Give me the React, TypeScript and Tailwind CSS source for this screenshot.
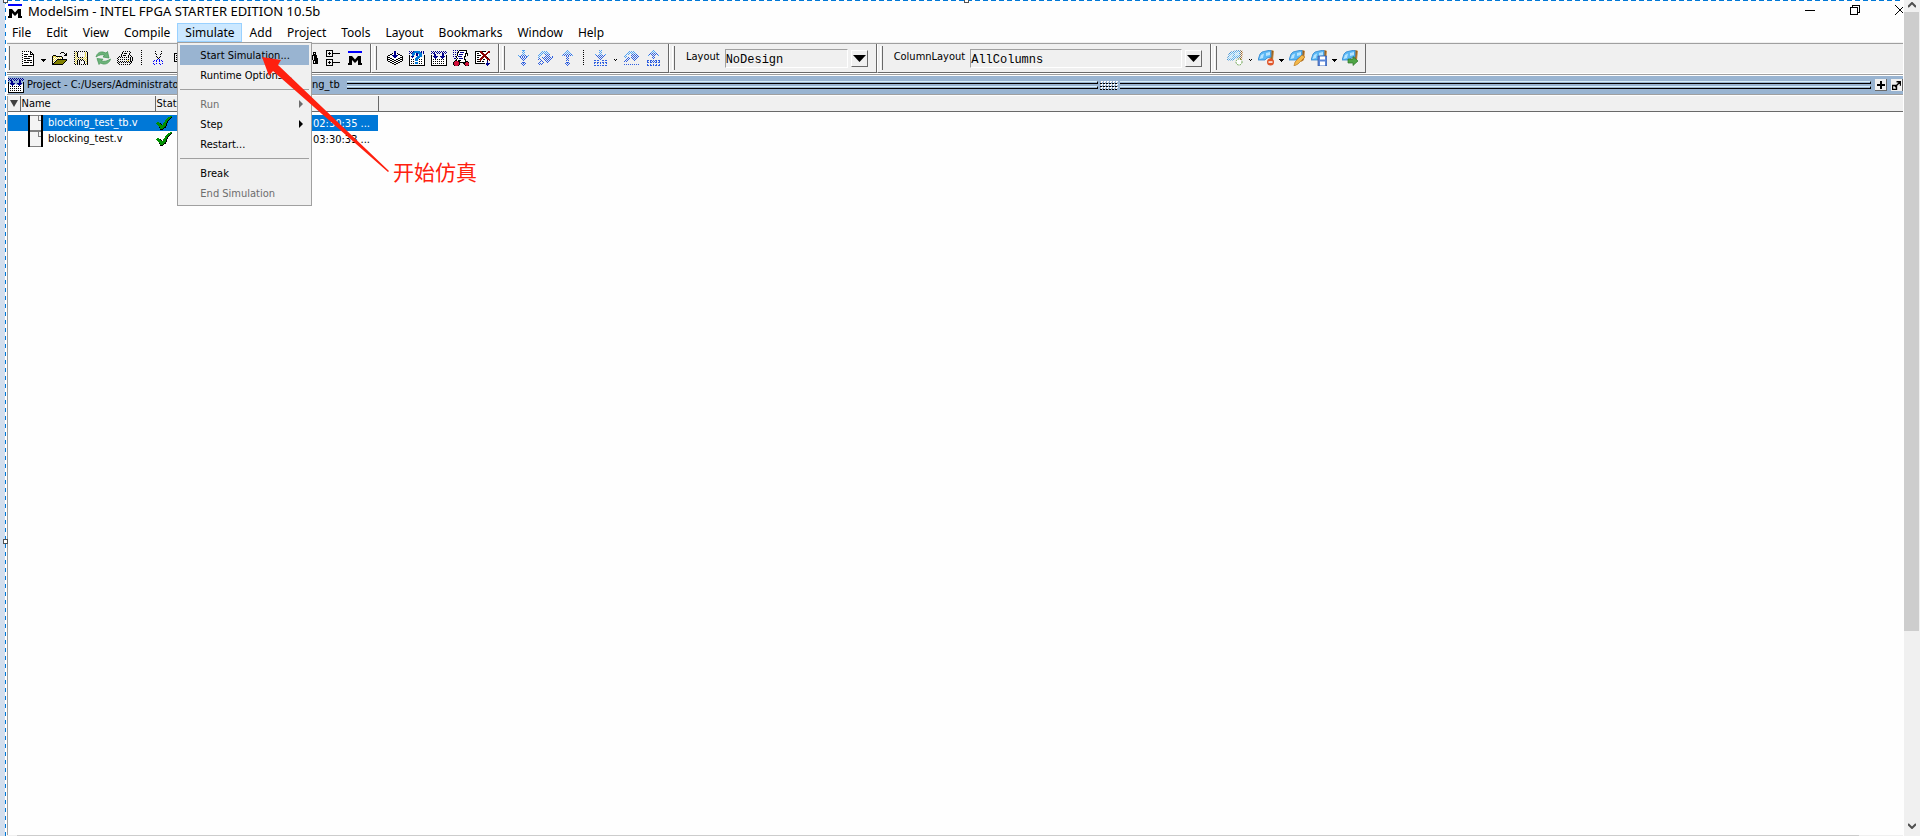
import type { ReactNode } from "react";

const colors: Record<string, string> = {
  k: "#000000",
  w: "#ffffff",
  n: "#00008b",
  B: "#0000ff",
  c: "#2f5fe0",
  l: "#4fa3f5",
  q: "#0078d7",
  y: "#e8d84a",
  o: "#808000",
  g: "#808080",
  r: "#8b0000",
  R: "#d0103a",
  d: "#009000",
};

const icons = {
  doc: [
    "k.k.k.k.k....",
    ".wwwwwwwkk...",
    "kwwwwwwwkwk..",
    ".wkkkkwwkkkk.",
    "kwwwwwwwwwwk.",
    ".wkkkwkkkkwk.",
    "kwwwwwwwwwwk.",
    ".wkkkkkkwwwk.",
    "kwwwwwwwwwwk.",
    ".wkkwkkkkkwk.",
    "kwwwwwwwwwwk.",
    ".wkkkkkwkkwk.",
    "kwwwwwwwwwwk.",
    ".wwwwwwwwwwk.",
    "kkkkkkkkkkkk.",
  ],
  open: [
    "..........kkk...",
    ".........k...k.k",
    "..............kk",
    "..kkk........kkk",
    ".kyyykkkkkk.....",
    ".kywywywywyk....",
    ".kwywywywywk....",
    ".kywywkkkkkkkkkk",
    ".kwywkoooooooook",
    ".kywkoooooooook.",
    ".kwkoooooooook..",
    ".kkoooooooook...",
    ".kkkkkkkkkkk....",
  ],
  save: [
    "k.k.k.k.k.k.k.",
    ".y.k.......y.k",
    "k.yk.w.w.w.y.k",
    ".y.k.......y.k",
    "k.yk.w.w.w.y.k",
    ".y.k.......y.k",
    "k.y.k.k.k.y.yk",
    ".y.y.y.y.y.y.k",
    "k.y.k.k.k.y.yk",
    ".y.k.k.k.k.y.k",
    "k.yk.k..w.k.yk",
    ".y.k.k..w.k..k",
    "k.yk.k..w.k.yk",
    ".k.k.k.k.k.k.k",
  ],
  print: [
    "......k.k.k.k...",
    ".....k.......k..",
    ".....k.kkk..k...",
    "....k.......k...",
    "....k.kkk..k.k..",
    "..k.k......k..k.",
    ".k.k.k.k.k.k.k.k",
    "k............k.k",
    ".k.k.k.k.k.k.k.k",
    "k.........yy.k.k",
    ".k.k.k.k.k.k.kk.",
    "k.k.k.k.k.k.k.k.",
    ".k...........k..",
    "..k.k.k.k.k.k...",
  ],
  cut: [
    "..k.....k.",
    "..........",
    "..k.....k.",
    "...k...k..",
    "..........",
    "...k...k..",
    "....k.k...",
    ".....k....",
    "....B.B...",
    ".B.B..B.B.",
    "B..B..B..B",
    "..........",
    "B..B..B..B",
    ".B.....B..",
  ],
  copy: [
    "kkkkkkkk....",
    "k......kk...",
    "k.kkk..kkk..",
    "k........k..",
    "k.kkk.kkkkkk",
    "k.....k....k",
    "k.kkk.k.kk.k",
    "k.....k....k",
    "kkkkkkk.kk.k",
    "......k....k",
    "......kkkkkk",
  ],
  find: [
    "..kkk...kkk..",
    "..k.k...k.k..",
    "..kkk...kkk..",
    ".kkkkk.kkkkk.",
    ".k.kkkkk.kkk.",
    ".k.kkkkk.kkk.",
    "k.kkkk.k.kkkk",
    "k.kkkk.k.kkkk",
    "kkkkk...kkkkk",
    "k.kkk...k.kkk",
    "k.kkk...k.kkk",
    "kkkkk...kkkkk",
  ],
  tree: [
    "kkkkkkk.......",
    "k.....k.......",
    "k..k..k.......",
    "k.kkk.kkkkkkkk",
    "k..k..k.......",
    "k.....k.......",
    "kkkkkkk.......",
    "..............",
    "..............",
    "kkkkkkk.......",
    "k.....k.......",
    "k..k..k.......",
    "k.kkk.kkkkkkkk",
    "k..k..k.......",
    "k.....k.......",
    "kkkkkkk.......",
  ],
  compile: [
    ".......nn.......",
    ".......nn.......",
    ".....kwnnwk.....",
    "...kkwwnnwwkk...",
    ".kkwwnnnnnnwwkk.",
    "kwwwwwnnnnwwwwwk",
    "kkkwwwwnnwwwwkkk",
    "kwwkkwwwwwwkkwwk",
    "kkkwwkkwwkkwwkkk",
    "kwwkkwwkkwwkkwwk",
    ".kkwwkkwwkkwwkk.",
    "...kkwwkkwwkk...",
    ".....kkwwkk.....",
    ".......kk.......",
  ],
  compileAll: [
    "n.n.n.n.n.n.n.n.",
    ".n.n.n.n.n.n.n.n",
    "n.nn..n.n..nn.n.",
    "...nn......nn...",
    "k..nn......nn..k",
    "k.nnnnn..nnnnn.k",
    "kw.nnn.w..nnn.wk",
    "kwwwnwwwwwwnwwwk",
    "kwkwkwkwkwkwkwwk",
    "kwwwwwwwwwwwwwwk",
    "kwkwkwkwkwkwkwwk",
    "kwwwwwwwwwwwwwwk",
    "kwkwkwkwkwkwkwwk",
    "kwwwwwwwwwwwwwwk",
    "kkkkkkkkkkkkkkkk",
  ],
  compileOld: [
    "n.n.nqqqqqq.n.n.",
    ".n.nqqqqqqqqn.n.",
    "n.nqqq.nnqqqq.n.",
    "...qqq.nn.qqq...",
    "k..qq..nn.qqq..k",
    "k.nnn...qqqqq..k",
    "kw.n.w.qqqqw.w.k",
    "kwwwwwqqqqwwwwwk",
    "kwkwkwqqqwkwkwwk",
    "kwwwwwqqqwwwwwwk",
    "kwkwkwwwwwkwkwwk",
    "kwwwwwqqqwwwwwwk",
    "kwkwkwqqqwkwkwwk",
    "kwwwwwwwwwwwwwwk",
    "kkkkkkkkkkkkkkkk",
  ],
  simulate: [
    "n.n.n.kkkkkkkk..",
    ".....kwwwwwwwk..",
    "n.n.nkwnnnnwwk..",
    "....kwwwwwwwkkk.",
    "n.n.kwnnnnwwkwk.",
    "....kwwwwwwwkwk.",
    "n.nkwnnnnwwkk...",
    "...kwwwwwwwk....",
    ".nn.kwnnnnwk....",
    "...kwwwwwwwkk...",
    "..kkwkkkwwwwk...",
    ".kRRRkkwwwwwkkk.",
    "kRRRRRkkkkkkkRRk",
    "kRRRRRk...kkRRRR",
    "kRRRRRk....kRRRR",
    ".kRRRk......kRRk",
  ],
  breakRun: [
    "kkkkkrrkkkk..rr.",
    "kwwwwrrrwwwwrrr.",
    "kwkkwwrrrwwrrw..",
    "kwwwwwwrrrrrw...",
    "kwkkkkwwrrrww...",
    "kwwwwwwrrrrrw...",
    "kwkkwwrrrwrrk...",
    "kwwwwrrrwwwrrr..",
    "kwkkrrrwkkwwrrr.",
    "kwwwwrwwwwwwkwr.",
    "kwkkkkwkkww.n...",
    "kwwwwwwwwww.n...",
    "kkkkkkkkkk.nnnn.",
    "...........nnn..",
    "............n...",
  ],
  down: [
    "....lll....",
    ".....l.....",
    "....l.l....",
    ".....l.....",
    "....l.l....",
    "l..c.c.c..l",
    ".lc.c.c.cl.",
    "..c.c.c.c..",
    "...c.c.c...",
    "....c.c....",
    ".....c.....",
    "...........",
    "....ccc....",
    "...c.c.c...",
    "....c.c....",
    ".....c.....",
  ],
  over: [
    "....l.l.l......",
    "...l.l.l.l.....",
    "..l.l.l.l.l....",
    ".l.l...c.c.c...",
    "l.l.....c.c....",
    ".l.....c.c.c..c",
    "l...c.c.c.c.c.c",
    ".c...c.c.c.c.c.",
    "c.c...c.c.c.c..",
    "...c...c.c.c...",
    "..c.c...c.c....",
    ".c...c...c.....",
    "c.c.c..........",
    ".c.c...........",
  ],
  up: [
    ".....l.....",
    "....l.l....",
    "...l.l.l...",
    "..l.l.l.l..",
    ".c.c.c.c.c.",
    "l.c.c.c.c.l",
    "....c.c....",
    ".....c.....",
    "....c.c....",
    ".....c.....",
    "....c.c....",
    "...........",
    "....ccc....",
    "...c.c.c...",
    "....c.c....",
    ".....c.....",
  ],
  downC: [
    ".....l.l.....",
    "......l......",
    ".....l.l.....",
    "......l......",
    ".l...l.l...l.",
    "..c.c.c.c.c..",
    "...c.c.c.c...",
    "....c.c.c....",
    ".....c.c.....",
    "......c......",
    "cc.cc...cc.cc",
    ".............",
    "cc.cc.c.cc.cc",
    "c..c..c..c..c",
    ".............",
    "cc.cc.c.cc.cc",
  ],
  overC: [
    ".....l.l.l.....",
    "....l.l.l.l....",
    "...l.l.l.l.l...",
    "..l.l...c.c.c..",
    ".l.....c.c.c.c.",
    "l.l.....c.c.c.c",
    ".l..c..c.c.c.c.",
    "...c.c..c.c.c..",
    "..c.c....c.c...",
    ".c.c......c....",
    "c.c............",
    "...............",
    "...............",
    "c.c.c.c.c.c.c.c",
    "...............",
  ],
  upC: [
    "......l......",
    ".....l.l.....",
    "....l.l.l....",
    "...c.c.c.c...",
    "..c.c.c.c.c..",
    ".l...c.c...l.",
    "......c......",
    ".....c.c.....",
    "......c......",
    ".............",
    "cc.cc.c.cc.cc",
    "c..c.c.c.c..c",
    "cc.cc.c.cc.cc",
    ".............",
    "c..c..c..c..c",
    "cc.cc.c.cc.cc",
  ],
  check: [
    "..............dd",
    "............dddk",
    "...........dddk.",
    "..........dddk..",
    ".........dddk...",
    ".........ddk....",
    ".dd.....dddk....",
    "ddddk..dddk.....",
    ".ddddk.dddk.....",
    "..ddddddddk.....",
    "...ddddddk......",
    "...kddddkk......",
    "....dddk........",
    "....kkk.........",
  ],
};

function Pixels({ name }: { name: keyof typeof icons }) {
  const rows = icons[name];
  const w = Math.max(...rows.map((r) => r.length));
  return (
    <svg width={w} height={rows.length} shapeRendering="crispEdges" aria-hidden="true" className="shrink-0">
      {rows.flatMap((row, y) =>
        row.split("").map((ch, x) =>
          ch === "." ? null : (
            <rect key={`${x}-${y}`} x={x} y={y} width={1} height={1} fill={colors[ch]} />
          )
        )
      )}
    </svg>
  );
}

function Caret({ small }: { small?: boolean }) {
  return (
    <svg width={small ? 3 : 5} height={small ? 2 : 3} shapeRendering="crispEdges" aria-hidden="true">
      <path d={small ? "M0 0h1v1h1v1h-1v-1h-1zM2 0h1v1h-1z" : "M0 0h5v1h-1v1h-1v1h-1v-1h-1v-1h-1z"} />
    </svg>
  );
}

function Tool({ label, children }: { label: string; children: ReactNode }) {
  return (
    <button type="button" aria-label={label} className="flex w-[22px] h-5 items-center justify-center">
      {children}
    </button>
  );
}

function DropArrow({ label, small }: { label: string; small?: boolean }) {
  return (
    <button type="button" aria-label={label} className="flex w-[9px] h-5 pt-1 items-center justify-center">
      <Caret small={small} />
    </button>
  );
}

function Dots() {
  return (
    <div className="w-[11px] h-4 flex justify-center">
      <div className="w-px bg-[repeating-linear-gradient(#000_0_1px,transparent_1px_2px)]" />
    </div>
  );
}

function Group({ children }: { children: ReactNode }) {
  return (
    <div className="flex items-center h-[29px] pl-0.5 pr-1 border-l border-l-white border-r border-b border-r-[#696969] border-b-[#696969] first:border-l-0 first:pl-0">
      <div className="w-[3px] h-6 mr-[7px] border-l border-l-white border-r border-r-[#696969]" />
      {children}
    </div>
  );
}

function LayoutPicker({ id, label, value, width }: { id: string; label: string; value: string; width: string }) {
  return (
    <div className="flex items-center px-1 text-[11px]">
      <label htmlFor={id} className="pr-[5px] pb-0.5">
        {label}
      </label>
      <select
        id={id}
        defaultValue={value}
        className={`${width} h-[19px] pt-0.5 mr-[3px] appearance-none border-t border-l border-t-[#a0a0a0] border-l-[#a0a0a0] border-b border-r border-b-white border-r-white font-['Liberation_Mono',monospace] text-xs`}
      >
        <option>{value}</option>
      </select>
      <button
        type="button"
        aria-label={`Open ${label}`}
        className="flex w-[17px] h-[17px] items-center justify-center border-t border-l border-white border-r border-b border-r-[#696969] border-b-[#696969]"
      >
        <svg width="13" height="7" aria-hidden="true">
          <path d="M0 0h13l-6.5 7z" />
        </svg>
      </button>
    </div>
  );
}

function Logo({ width }: { width: number }) {
  return (
    <svg width={width} height={width} viewBox="0 0 14 14" aria-hidden="true" className="shrink-0">
      <path d="M0 0h14v2H0z" fill="#0000ff" />
      <path d="M1 5h3l3 3.5L10 5h3v7h1v2h-4V9l-3 3-3-3v5H0v-2h1z" />
    </svg>
  );
}

function Refresh() {
  return (
    <svg width="16" height="16" viewBox="0 0 16 16" aria-hidden="true">
      <path d="M1 7C2 3 5 1.500 8 2l3 1 1.500-1.500L14 8 8 7l1.500-1.700C7 4 4 5 1 7z" fill="#6db37a" stroke="#3f9150" strokeWidth=".7" />
      <path d="M15.500 9C14.500 13 11 14.500 8 14l-2.500-1L4 14.500 2 8.500l6 .7-1.500 1.600C9 12 12.500 11 15.500 9z" fill="#6db37a" stroke="#3f9150" strokeWidth=".7" />
    </svg>
  );
}

// Bookmark ribbon with a badge in the lower right corner
function Bookmark({ faded, children }: { faded?: boolean; children: ReactNode }) {
  return (
    <svg width="16" height="16" viewBox="0 0 16 16" aria-hidden="true">
      {faded && (
        <defs>
          <pattern id="dither" width="2" height="2" patternUnits="userSpaceOnUse">
            <path d="M0 0h1v1h-1zM1 1h1v1h-1z" fill="#f0f0f0" />
          </pattern>
        </defs>
      )}
      <path d="M11 1l3-1 2 1-1 9-3 2z" fill="#c98a3d" />
      <path d="M14 1l1 0-1 9-1 1z" fill="#8a5a20" />
      <path d="M4 2l4-1 5-1v7l-4 1-2 2H0l2-6z" fill="#5cb8f5" stroke="#2f86cf" strokeWidth=".8" />
      <path d="M3 5l3-1.500L5 8 1.500 9zM8 3l4-1v3l-4 1z" fill="#b5e4ff" />
      {faded && <path d="M0 0h16v16H0z" fill="url(#dither)" />}
      {children}
    </svg>
  );
}

const menus = ["File", "Edit", "View", "Compile", "Simulate", "Add", "Project", "Tools", "Layout", "Bookmarks", "Window", "Help"];

const simulateMenu: { label: string; active?: boolean; disabled?: boolean; sub?: boolean }[][] = [
  [{ label: "Start Simulation...", active: true }, { label: "Runtime Options..." }],
  [{ label: "Run", disabled: true, sub: true }, { label: "Step", sub: true }, { label: "Restart..." }],
  [{ label: "Break" }, { label: "End Simulation", disabled: true }],
];

const files = [
  { name: "blocking_test_tb.v", modified: "02:30:35 ...", selected: true },
  { name: "blocking_test.v", modified: "03:30:33 ...", selected: false },
];

function SimulateMenu() {
  return (
    <div className="absolute left-0 top-full z-10 w-[135px] p-0.5 bg-[#f0f0f0] border border-[#a0a0a0] font-['DejaVu_Sans_Condensed','DejaVu_Sans',sans-serif] text-[11px]">
      {simulateMenu.map((section, i) => (
        <div key={i}>
          {i > 0 && <div className="my-1 h-px bg-[#a0a0a0]" />}
          {section.map((item) => (
            <button
              key={item.label}
              type="button"
              disabled={item.disabled}
              className={`flex w-full h-5 items-center justify-between pl-5 pr-1.5 whitespace-nowrap ${item.active ? "bg-[#99b4d1]" : ""} ${
                item.disabled ? "text-[#6d6d6d]" : "text-black"
              }`}
            >
              {item.label}
              {item.sub && (
                <svg width="4" height="8" aria-hidden="true">
                  <path d="M0 0l4 4-4 4z" fill="currentColor" />
                </svg>
              )}
            </button>
          ))}
        </div>
      ))}
    </div>
  );
}

function TitleBar() {
  return (
    <header className="flex h-[22px] items-center justify-between pl-px">
      <div className="flex items-center pb-0.5">
        <Logo width={14} />
        <h1 className="pl-1.5 text-[13px] leading-5">ModelSim - INTEL FPGA STARTER EDITION 10.5b</h1>
      </div>
      <div className="flex h-4 self-start">
        <button type="button" aria-label="Minimize" className="flex w-[45px] items-center justify-center pt-0.5">
          <svg width="10" height="1"><path d="M0 0h10v1H0z" /></svg>
        </button>
        <button type="button" aria-label="Restore" className="flex w-[45px] items-center justify-center pt-0.5">
          <svg width="10" height="10" fill="none" stroke="#000" shapeRendering="crispEdges">
            <path d="M.5 2.500h7v7h-7zM2.500 2.500v-2h7v7h-2" />
          </svg>
        </button>
        <button type="button" aria-label="Close" className="flex w-[26px] items-center justify-end pt-0.5">
          <svg width="8" height="10" fill="none" stroke="#000"><path d="M0 0l10 10M0 10L10 0" /></svg>
        </button>
      </div>
    </header>
  );
}

function Toolbar() {
  return (
    <div className="flex h-[31px] border-t border-t-[#a0a0a0] border-b border-b-white bg-[#f0f0f0]">
      <Group>
        <Tool label="New"><Pixels name="doc" /></Tool>
        <DropArrow label="New options" />
        <Tool label="Open"><Pixels name="open" /></Tool>
        <Tool label="Save"><Pixels name="save" /></Tool>
        <Tool label="Reload"><Refresh /></Tool>
        <Tool label="Print"><Pixels name="print" /></Tool>
        <Dots />
        <Tool label="Cut"><Pixels name="cut" /></Tool>
        <Tool label="Copy"><Pixels name="copy" /></Tool>
        <div className="w-[109px]" />
        <Tool label="Find"><Pixels name="find" /></Tool>
        <Tool label="Hierarchy"><Pixels name="tree" /></Tool>
        <Tool label="ModelSim"><Logo width={14} /></Tool>
      </Group>
      <Group>
        <Tool label="Compile"><Pixels name="compile" /></Tool>
        <Tool label="Compile out of date"><Pixels name="compileOld" /></Tool>
        <Tool label="Compile all"><Pixels name="compileAll" /></Tool>
        <Tool label="Simulate"><Pixels name="simulate" /></Tool>
        <Tool label="Break"><Pixels name="breakRun" /></Tool>
      </Group>
      <Group>
        <Tool label="Step into"><Pixels name="down" /></Tool>
        <Tool label="Step over"><Pixels name="over" /></Tool>
        <Tool label="Step out"><Pixels name="up" /></Tool>
        <Dots />
        <Tool label="Step into current"><Pixels name="downC" /></Tool>
        <DropArrow label="Step options" small />
        <Tool label="Step over current"><Pixels name="overC" /></Tool>
        <Tool label="Step out current"><Pixels name="upC" /></Tool>
      </Group>
      <Group>
        <LayoutPicker id="layout" label="Layout" value="NoDesign" width="w-[123px]" />
      </Group>
      <Group>
        <LayoutPicker id="column-layout" label="ColumnLayout" value="AllColumns" width="w-[212px]" />
      </Group>
      <Group>
        <Tool label="Add bookmark">
          <Bookmark faded><circle cx="12" cy="12" r="3" fill="#fff" stroke="#5a9a3a" strokeDasharray="1.500 1" /></Bookmark>
        </Tool>
        <DropArrow label="Add bookmark options" small />
        <Tool label="Delete bookmark">
          <Bookmark><circle cx="12.500" cy="12" r="3.500" fill="#e0562a" /><path d="M10.500 11.300h4v1.500h-4z" fill="#fff" /></Bookmark>
        </Tool>
        <DropArrow label="Delete bookmark options" />
        <Tool label="Edit bookmarks">
          <Bookmark><path d="M13 5l3 2-7 7-4 2 1-4z" fill="#f3b84a" stroke="#b9781e" strokeWidth=".7" /></Bookmark>
        </Tool>
        <Tool label="Save bookmarks">
          <Bookmark><path d="M7 6h9v10H7z" fill="#5b86d8" stroke="#34589f" strokeWidth=".7" /><path d="M9 6.500h5v3H9zM9 11.500h5v4H9z" fill="#fff" /></Bookmark>
        </Tool>
        <DropArrow label="Save bookmarks options" />
        <Tool label="Go to bookmark">
          <Bookmark><path d="M6 9h5V6.500l5 4.500-5 4.500V13H6z" fill="#4fa545" stroke="#2c7428" strokeWidth=".7" /></Bookmark>
        </Tool>
      </Group>
    </div>
  );
}

function Rails() {
  return (
    <div className="flex-1 flex flex-col gap-0.5">
      <div className="h-[3px] border-t border-t-[#d8f0f8] border-b border-b-black border-r border-r-black" />
      <div className="h-[3px] border-t border-t-[#d8f0f8] border-b border-b-black border-r border-r-black" />
    </div>
  );
}

function PaneTitle() {
  return (
    <div className="flex items-center h-[18px] bg-[#99b4d1] text-[11px] leading-4">
      <div className="w-[17px]"><Pixels name="compileAll" /></div>
      <h2 className="flex pl-0.5 pr-[7px] whitespace-nowrap">
        <span className="w-[285px] overflow-hidden">Project - C:/Users/Administrator</span>
        <span>ng_tb</span>
      </h2>
      <div className="flex flex-1 items-center">
        <div className="flex basis-[752px] grow-[752]"><Rails /></div>
        <div className="w-[22px] h-[9px] px-0.5">
          <div className="h-full bg-[conic-gradient(#fff_25%,#99b4d1_0_50%,#000_0_75%,#99b4d1_0)] bg-[length:3px_3px]" />
        </div>
        <div className="flex basis-[751px] grow-[751]"><Rails /></div>
      </div>
      <button type="button" aria-label="Expand pane" className="flex w-3 h-3 ml-1 mr-1 items-center justify-center bg-[#f0f0f0] border-r border-b border-[#696969]">
        <svg width="8" height="8"><path d="M3 0h2v3h3v2H5v3H3V5H0V3h3z" /></svg>
      </button>
      <button type="button" aria-label="Undock pane" className="flex w-3 h-3 items-center justify-center bg-[#f0f0f0] border-r border-[#696969]">
        <svg width="9" height="9" fill="none" stroke="#000">
          <path d="M.5 4.500h4v4h-4zM3 6l5-5M4.500.8h4v4" strokeWidth="1.400" />
        </svg>
      </button>
    </div>
  );
}

function FileIcon() {
  return (
    <svg width="15" height="16" className="block" shapeRendering="crispEdges" aria-hidden="true">
      <path d="M0 0h15v16H0z" />
      <path d="M2 0h11v16H2z" fill="#f4f4f4" />
      <path d="M10 1v4h3M2 .5h11M2 15.500h11" fill="none" stroke="#808080" />
    </svg>
  );
}

function ProjectTable() {
  return (
    <table className="w-full table-fixed border-collapse text-[11px] leading-[15px] whitespace-nowrap text-left">
      <colgroup>
        <col className="w-3" />
        <col className="w-[135px]" />
        <col className="w-[158px]" />
        <col className="w-[65px]" />
        <col />
      </colgroup>
      <thead className="bg-[#f0f0f0] border-b border-b-[#696969]">
        <tr>
          <th className="p-0 border-r border-r-[#696969]">
            <svg width="8" height="7" className="ml-0.5" aria-hidden="true"><path d="M0 0h8L4 7z" fill="#404040" /></svg>
          </th>
          <th className="p-0 pl-px font-normal border-r border-r-[#696969]">Name</th>
          <th className="p-0 pl-px font-normal">Status</th>
          <th className="p-0 border-r border-r-[#696969]" />
          <th className="p-0" />
        </tr>
      </thead>
      <tbody className="before:block before:h-[3px]">
        {files.map((f) => (
          <tr key={f.name} className={f.selected ? "text-white" : "text-black"}>
            <td colSpan={2} className={`p-0 ${f.selected ? "bg-[#0078d7]" : ""}`}>
              <div className="flex h-4 pl-5">
                <FileIcon />
                <span className="pl-[5px]">{f.name}</span>
              </div>
            </td>
            <td className={`p-0 pl-px ${f.selected ? "bg-[#0078d7]" : ""}`}><Pixels name="check" /></td>
            <td className={`p-0 ${f.selected ? "bg-[#0078d7]" : ""}`}>{f.modified}</td>
            <td />
          </tr>
        ))}
      </tbody>
    </table>
  );
}

function ScrollArrow({ d }: { d: string }) {
  return (
    <svg width="8" height="6" fill="none" stroke="#505050" strokeWidth="2" aria-hidden="true">
      <path d={d} />
    </svg>
  );
}

export default function App() {
  return (
    <div className="relative flex min-h-screen overflow-hidden bg-[#fefefe] text-black font-['Noto_Sans','Noto_Sans_CJK_SC',sans-serif]">
      <div className="w-[5px] bg-[#d3deed]" />
      <div className="w-px mr-px bg-[repeating-linear-gradient(#0078d7_0_4px,#fff_4px_8px)]" />

      <main className="flex flex-1 flex-col min-w-0 mr-px">
        <div className="h-px bg-[repeating-linear-gradient(90deg,#0078d7_0_5px,#fff_5px_8px)]" />
        <TitleBar />
        <nav className="flex h-[19px] -ml-[3px] text-xs leading-[17px]">
          {menus.map((m) => (
            <div key={m} className="relative">
              <button type="button" className={`h-[19px] pl-2 pr-[7px] ${m === "Simulate" ? "bg-[#cce8ff] outline outline-[#99d1ff] -outline-offset-1" : ""}`}>
                {m}
              </button>
              {m === "Simulate" && <SimulateMenu />}
            </div>
          ))}
        </nav>
        <div className="h-px bg-[#f0f0f0]" />
        <div className="font-['DejaVu_Sans_Condensed','DejaVu_Sans',sans-serif]">
          <Toolbar />
          <div className="border-t border-t-[#a0a0a0] border-b border-b-[#a0a0a0] pt-px pl-px mb-px">
            <PaneTitle />
          </div>
        </div>
        <section aria-label="Project files" className="flex-1 border-l border-l-[#a0a0a0] font-['DejaVu_Sans_Condensed','DejaVu_Sans',sans-serif]">
          <ProjectTable />
        </section>
        <div className="flex h-px bg-[#f0f0f0] pl-2.5 pr-11">
          <div className="flex-1 bg-[#cccccc]" />
        </div>
      </main>

      <div className="flex flex-col w-4 items-center bg-[#f0f0f0]">
        <div className="h-3 pt-0.5"><ScrollArrow d="M0 5l4-4 4 4" /></div>
        <div className="w-full grow-[619] pr-px"><div className="h-full bg-[#cdcdcd]" /></div>
        <div className="grow-[188]" />
        <div className="h-[17px] pt-1"><ScrollArrow d="M0 1l4 4 4-4" /></div>
      </div>

      <div className="absolute left-[3px] top-[539px] size-[5px] bg-white border border-[#505050]" />
      <div className="absolute left-[3px] -top-0.5 size-[5px] bg-white border border-[#505050]" />
      <div className="absolute left-1/2 -top-0.5 ml-1 size-[5px] bg-white border border-[#505050]" />

      <svg width="130" height="120" className="absolute left-[261px] top-14 z-20" aria-hidden="true">
        <path d="M1 1l19 3-3 5 111 106-1 1L12 15l-4 5z" fill="#ff200f" />
      </svg>
      <p className="absolute left-[393px] top-[156px] z-20 text-[21px] leading-[30px] text-[#ff200f] font-['Noto_Sans_CJK_SC',sans-serif]">
        开始仿真
      </p>
    </div>
  );
}
